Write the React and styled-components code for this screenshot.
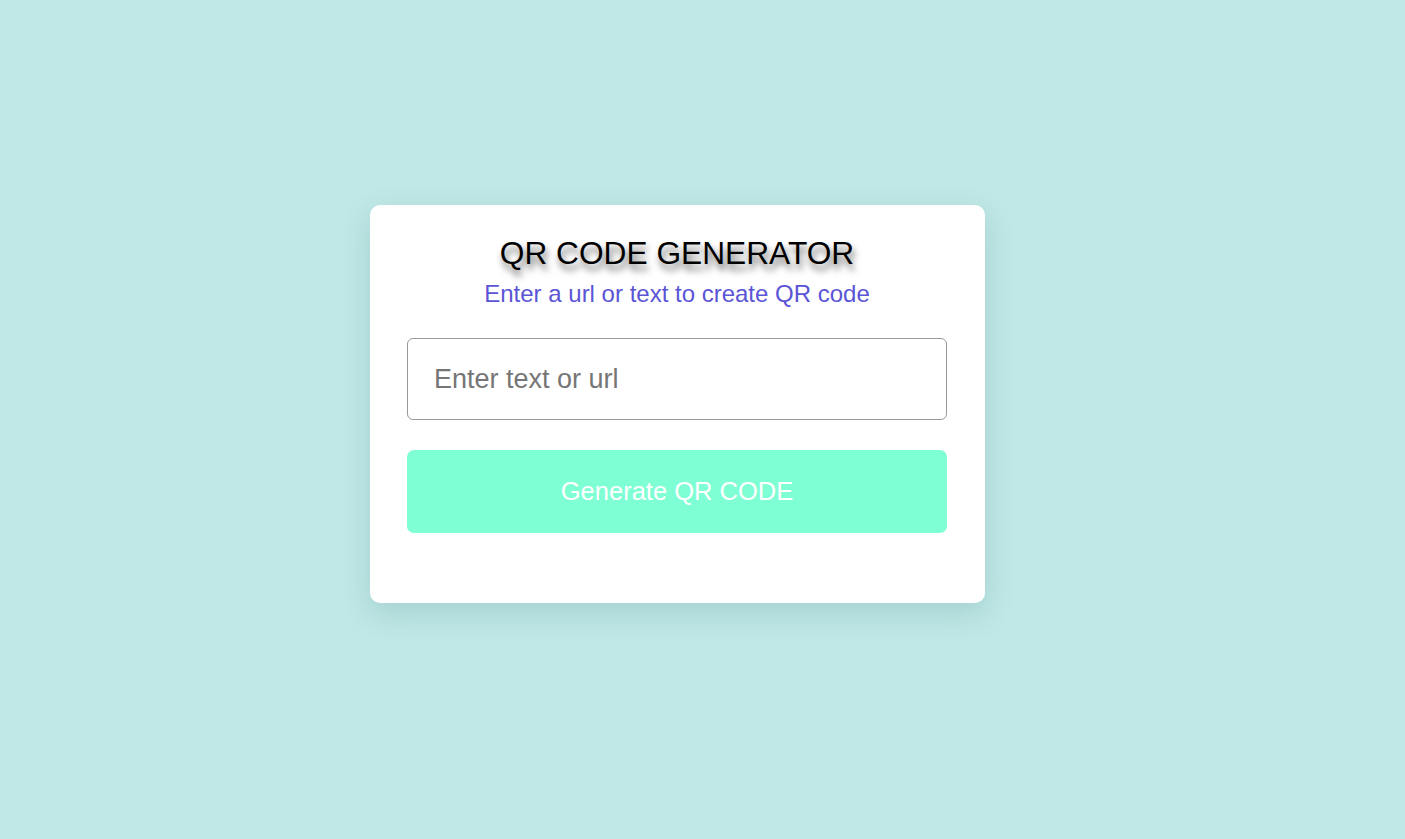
import React, { useState } from 'react';
import styled, { createGlobalStyle } from 'styled-components';

const GlobalStyle = createGlobalStyle`
  * { box-sizing: border-box; }
  html, body { margin: 0; padding: 0; }
  body {
    background: #bfe8e6;
    font-family: "Liberation Sans", Arial, sans-serif;
  }
`;

const Page = styled.div`
  min-height: 100vh;
  display: flex;
  align-items: center;
  justify-content: center;
  padding: 0 50px 31px 0;
`;

const Card = styled.div`
  width: 615px;
  min-height: 398px;
  background: #fff;
  border-radius: 10px;
  padding: 30px 38px 40px 37px;
  box-shadow: 0 10px 30px rgba(0, 80, 80, 0.15);
  display: flex;
  flex-direction: column;
  align-items: center;
`;

const Title = styled.h1`
  margin: 0;
  font-size: 31.7px;
  font-weight: 400;
  line-height: 37px;
  color: #000;
  text-shadow: 2px 6px 7px rgba(0, 0, 0, 0.6);
`;

const Subtitle = styled.p`
  margin: 7px 0 0;
  font-size: 24px;
  line-height: 29px;
  color: #5b55d6;
`;

const Input = styled.input`
  width: 100%;
  height: 82px;
  margin-top: 30px;
  padding: 0 26px;
  border: 1px solid #999;
  border-radius: 6px;
  font-family: inherit;
  font-size: 27px;
  color: #333;
  outline: none;
  &::placeholder { color: #767676; }
`;

const Button = styled.button`
  width: 100%;
  height: 83px;
  margin-top: 30px;
  border: none;
  border-radius: 7px;
  background: #7fffd4;
  color: #fff;
  font-family: inherit;
  font-size: 25.5px;
  cursor: pointer;
`;

export default function App() {
  const [text, setText] = useState('');
  return (
    <>
      <GlobalStyle />
      <Page>
        <Card>
          <Title>QR CODE GENERATOR</Title>
          <Subtitle>Enter a url or text to create QR code</Subtitle>
          <Input
            value={text}
            onChange={(e) => setText(e.target.value)}
            placeholder="Enter text or url"
          />
          <Button>Generate QR CODE</Button>
        </Card>
      </Page>
    </>
  );
}
